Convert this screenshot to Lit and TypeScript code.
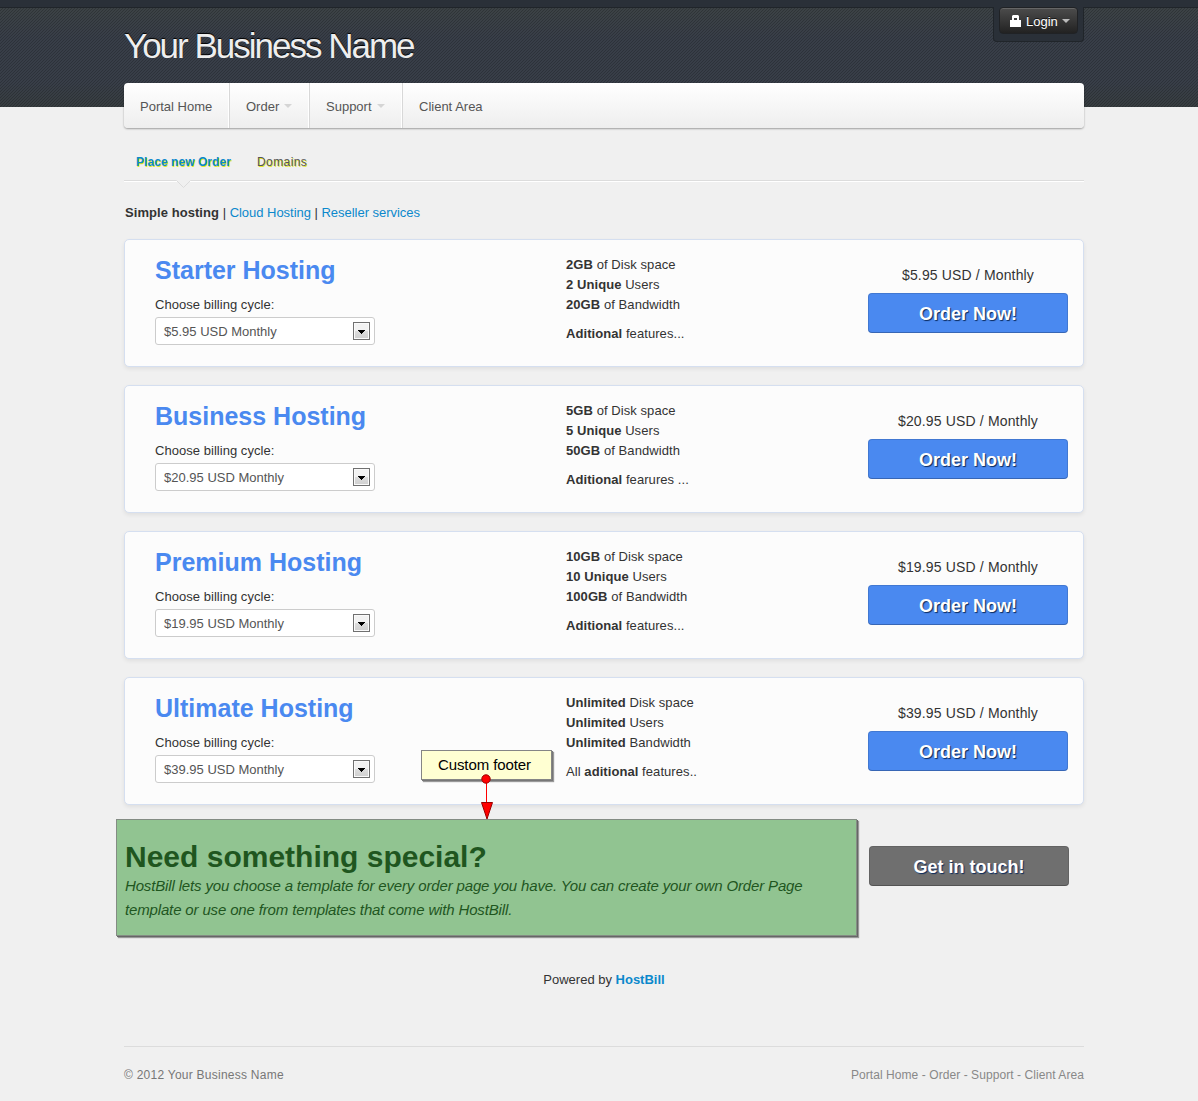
import { LitElement, html, css } from "lit";
import { customElement, property } from "lit/decorators.js";

interface Feature { bold: string; text: string; }
interface Plan {
  name: string;
  price: string;
  features: Feature[];
  prefix?: string;
  extraBold: string;
  extra: string;
}

const PLANS: Plan[] = [
  {
    name: "Starter Hosting", price: "$5.95",
    features: [{ bold: "2GB", text: "of Disk space" }, { bold: "2 Unique", text: "Users" }, { bold: "20GB", text: "of Bandwidth" }],
    extraBold: "Aditional", extra: "features...",
  },
  {
    name: "Business Hosting", price: "$20.95",
    features: [{ bold: "5GB", text: "of Disk space" }, { bold: "5 Unique", text: "Users" }, { bold: "50GB", text: "of Bandwidth" }],
    extraBold: "Aditional", extra: "fearures ...",
  },
  {
    name: "Premium Hosting", price: "$19.95",
    features: [{ bold: "10GB", text: "of Disk space" }, { bold: "10 Unique", text: "Users" }, { bold: "100GB", text: "of Bandwidth" }],
    extraBold: "Aditional", extra: "features...",
  },
  {
    name: "Ultimate Hosting", price: "$39.95",
    features: [{ bold: "Unlimited", text: "Disk space" }, { bold: "Unlimited", text: "Users" }, { bold: "Unlimited", text: "Bandwidth" }],
    prefix: "All ", extraBold: "aditional", extra: "features..",
  },
];

@customElement("plan-card")
export class PlanCard extends LitElement {
  @property({ attribute: false }) plan!: Plan;

  static styles = css`
    :host {
      display: flex;
      box-sizing: border-box;
      height: 128px;
      background: #fcfcfc;
      border: 1px solid #d5dff0;
      border-radius: 5px;
      box-shadow: 0 2px 4px rgba(0, 0, 0, 0.07);
      color: #333;
    }
    .main { box-sizing: border-box; width: 441px; padding: 15px 0 0 30px; }
    .name { margin: 0; font-size: 25px; line-height: 30px; font-weight: bold; color: #4a89f0; white-space: nowrap; }
    .label { margin-top: 10px; line-height: 20px; letter-spacing: 0.04px; }
    .select {
      display: flex; align-items: center; justify-content: space-between;
      box-sizing: border-box; width: 220px; height: 28px; margin-top: 2px;
      padding: 0 4px 0 8px;
      border: 1px solid #ccc; border-radius: 3px; background: #fff; color: #555;
    }
    .select .value { line-height: 20px; padding-top: 2px; }
    .drop {
      display: block; box-sizing: border-box; width: 17px; height: 18px;
      border: 1px solid #707070; background: linear-gradient(#f2f2f2 0 50%, #ddd 50%, #cfcfcf);
      box-shadow: inset 0 0 0 1px #fafafa;
    }
    .drop svg { display: block; }
    .features { width: 302px; padding-top: 15px; line-height: 20px; letter-spacing: 0.07px; }
    .extra { margin-top: 9px; }
    .buy { width: 200px; padding-top: 25px; text-align: center; }
    .price { font-size: 14px; line-height: 20px; margin-bottom: 8px; letter-spacing: 0.15px; }
    .btn {
      box-sizing: border-box; height: 40px; line-height: 42px;
      font-size: 18px; font-weight: bold; color: #fff;
      background: #4a89f0; border-radius: 4px;
      box-shadow: inset 0 0 0 1px rgba(0, 0, 0, 0.12), inset 0 -1px 0 rgba(0, 0, 0, 0.14);
      text-shadow: 1px 1px 1px #0b2a5c;
    }
  `;

  render() {
    const p = this.plan;
    return html`
      <div class="main">
        <h2 class="name">${p.name}</h2>
        <div class="label">Choose billing cycle:</div>
        <div class="select">
          <span class="value">${p.price} USD Monthly</span>
          <span class="drop"><svg width="15" height="16" shape-rendering="crispEdges"><path d="M4 7h7v1h-1v1h-1v1h-1v1h-1v-1h-1v-1h-1v-1h-1z" fill="#000"/></svg></span>
        </div>
      </div>
      <div class="features">
        ${p.features.map((f) => html`<div><b>${f.bold}</b> ${f.text}</div>`)}
        <div class="extra">${p.prefix ?? ""}<b>${p.extraBold}</b> ${p.extra}</div>
      </div>
      <div class="buy">
        <div class="price">${p.price} USD / Monthly</div>
        <div class="btn">Order Now!</div>
      </div>
    `;
  }
}

@customElement("app-root")
export class AppRoot extends LitElement {
  static styles = css`
    :host {
      display: block; position: relative; box-sizing: border-box;
      width: 1198px; height: 1101px; overflow: hidden;
      background: #f0f0f0; color: #333;
      font: 13px/20px "Liberation Sans", Arial, sans-serif;
    }
    .topbar { height: 7px; background: #2a3038; border-bottom: 1px solid #20252a; }
    .header {
      height: 99px; box-sizing: border-box; padding: 0 114px 0 124px;
      display: flex; justify-content: space-between; align-items: flex-start;
      background:
        url("data:image/svg+xml,%3Csvg xmlns='http://www.w3.org/2000/svg' width='3' height='3' shape-rendering='crispEdges'%3E%3Cpath d='M0 2h1v1H0zM1 1h1v1H1zM2 0h1v1H2z' fill-opacity='.2'/%3E%3C/svg%3E"),
        linear-gradient(#3c4245, #383e48 30%, #383e48 75%, #373d40);
    }
    .brand {
      margin: 18px 0 0; font-size: 35px; line-height: 40px; font-weight: normal;
      letter-spacing: -2px; color: #eee; text-shadow: 0 -1px 1px #000;
      white-space: nowrap;
    }
    .login-box {
      box-sizing: border-box; width: 91px; height: 35px; margin-top: -1px; padding: 0 6px;
      background: #2a3038; border: 1px solid #20252a; border-top: 0; border-radius: 0 0 4px 4px;
    }
    .login {
      display: flex; align-items: center; box-sizing: border-box; width: 79px; height: 27px;
      padding-left: 10px; color: #fff; border: 1px solid #202225; border-radius: 4px; margin-left: -1px;
      background: linear-gradient(#4c4c4c, #222); box-shadow: inset 0 1px 0 #666;
      text-shadow: 0 -1px 0 #111;
    }
    .login svg { display: block; }
    .login span { margin: 0 4px 0 5px; padding-top: 3px; }
    .wrap { width: 960px; margin-left: 124px; }
    .nav {
      display: flex; height: 45px; margin-top: -24px; border-radius: 4px;
      background: linear-gradient(#fff, #eee);
      box-shadow: 0 1px 2px rgba(0, 0, 0, 0.35);
      position: relative; line-height: 20px; color: #555;
    }
    .nav div { box-sizing: border-box; padding: 2px 0 0 16px; border-right: 1px solid #d8d8d8; box-shadow: inset -1px 0 0 #fff; display: flex; align-items: center; }
    .nav .home { width: 106px; }
    .nav .order { width: 80px; }
    .nav .support { width: 93px; }
    .nav .client { border: 0; box-shadow: none; }
    .caret { display: block; width: 0; height: 0; border: 4px solid transparent; border-top-color: #d5d5d5; border-bottom: 0; margin: 0 0 1px 5px; }
    .sub {
      display: flex; box-sizing: border-box; height: 53px; padding: 24px 0 0 12px; position: relative;
      border-bottom: 1px solid #dcdcdc; box-shadow: 0 1px 0 #fff;
      font-size: 12px; line-height: 20px; color: #555;
    }
    .sub b { color: #0b88cc; margin-right: 26px; letter-spacing: 0.06px; }
    .sub span { letter-spacing: 0.42px; }
    .sub b, .sub span { text-shadow: 1px 1px 0 rgba(226, 230, 0, 0.85); }
    .notch { position: absolute; left: 52px; top: 52px; display: block; }
    .cats { padding: 22px 0 16px 1px; }
    .cats b { letter-spacing: 0.06px; }
    .cats a { letter-spacing: -0.03px; }
    a { color: #0b88cc; text-decoration: none; }
    .plans { display: flex; flex-direction: column; gap: 18px; }
    .custom { display: flex; margin: 14px 0 0 -8px; }
    .special {
      box-sizing: border-box; width: 741px; height: 117px; padding: 20px 0 0 8px; background: #91c491;
      border: 1px solid #848c84; box-shadow: 1px 1px 0 #666, 2px 2px 1px #999; color: #1f561f;
    }
    .special h1 { margin: 0; font-size: 30px; line-height: 34px; }
    .special p { margin: 0; font-size: 15px; line-height: 24px; font-style: italic; white-space: nowrap; letter-spacing: -0.15px; }
    .touch {
      width: 200px; height: 40px; margin: 27px 0 0 12px; line-height: 42px; text-align: center;
      font-size: 18px; font-weight: bold; color: #fff; background: #6f6f6f; border-radius: 4px;
      box-shadow: inset 0 0 0 1px rgba(0, 0, 0, 0.1), inset 0 -1px 0 rgba(0, 0, 0, 0.16);
      text-shadow: 1px 1px 1px #0b2a5c;
    }
    .powered { margin-top: 34px; text-align: center; }
    .footer { display: flex; justify-content: space-between; margin-top: 56px; padding-top: 18px; border-top: 1px solid #dcdcdc; font-size: 12px; color: #777; letter-spacing: 0.25px; }
    .footer .links { color: #888; letter-spacing: 0.07px; }
    .note {
      position: absolute; left: 421px; top: 750px; box-sizing: border-box; width: 131px; height: 30px;
      padding-left: 16px; line-height: 28px; font-size: 15px; color: #000;
      background: #ffffd2; border: 1px solid #858585; box-shadow: 1px 1px 0 #777, 2px 2px 1px #999;
      letter-spacing: -0.1px;
    }
    .arrow { position: absolute; left: 478px; top: 772px; display: block; }
  `;

  render() {
    return html`
      <div class="topbar"></div>
      <div class="header">
        <h1 class="brand">Your Business Name</h1>
        <div class="login-box">
          <div class="login">
            <svg width="11" height="12" viewBox="0 0 11 12"><path d="M0 5h2V1L3 0h5l1 1v4h2v7H0zM4 5h3V3H4z" fill="#fff" fill-rule="evenodd"/></svg>
            <span>Login</span>
            <svg width="8" height="4"><path d="M0 0h8L4 4z" fill="#bbb"/></svg>
          </div>
        </div>
      </div>
      <div class="wrap">
        <div class="nav">
          <div class="home">Portal Home</div>
          <div class="order">Order<i class="caret"></i></div>
          <div class="support">Support<i class="caret"></i></div>
          <div class="client">Client Area</div>
        </div>
        <div class="sub">
          <b>Place new Order</b><span>Domains</span>
          <svg class="notch" width="15" height="8"><path d="M0 0h15L7.500 7.500z" fill="#f0f0f0"/><path d="M.5 .5l7 7 7-7" fill="none" stroke="#dcdcdc"/></svg>
        </div>
        <div class="cats"><b>Simple hosting</b> | <a>Cloud Hosting</a> | <a>Reseller services</a></div>
        <div class="plans">${PLANS.map((p) => html`<plan-card .plan=${p}></plan-card>`)}</div>
        <div class="custom">
          <div class="special">
            <h1>Need something special?</h1>
            <p>HostBill lets you choose a template for every order page you have. You can create your own Order Page<br>template or use one from templates that come with HostBill.</p>
          </div>
          <div class="touch">Get in touch!</div>
        </div>
        <div class="powered">Powered by <a><b>HostBill</b></a></div>
        <div class="footer"><span>© 2012 Your Business Name</span><span class="links">Portal Home - Order - Support - Client Area</span></div>
      </div>
      <div class="note">Custom footer</div>
      <svg class="arrow" width="18" height="49"><path d="M8.500 8v24" stroke="#f00"/><circle cx="8" cy="7" r="4.200" fill="#f00" stroke="#900"/><path d="M3.500 30.500h11L9 47z" fill="#f00" stroke="#900"/></svg>
    `;
  }
}
